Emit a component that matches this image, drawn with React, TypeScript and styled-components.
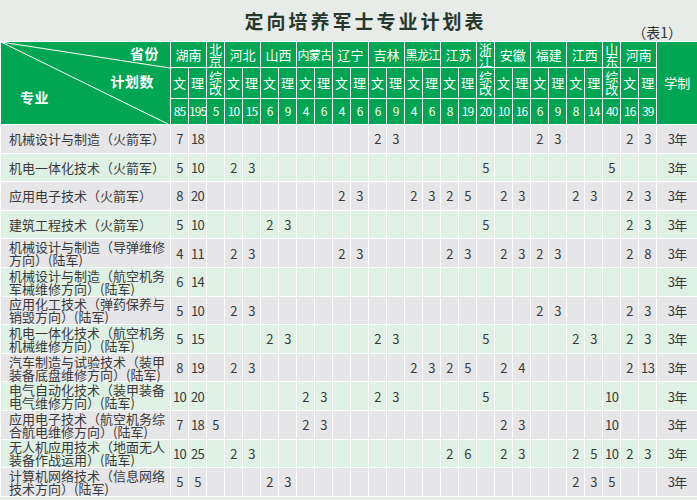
import styled, { createGlobalStyle } from "styled-components";
import { Fragment } from "react";

const GlobalStyle = createGlobalStyle`
  html, body {
    margin: 0;
    padding: 0;
  }
  body {
    background: #e4ede6;
    font-family: "Noto Sans CJK SC", "Noto Sans", sans-serif;
  }
`;

type Province = { name: string; kinds: string[]; totals: number[] };

const provinces: Province[] = [
  { name: "湖南", kinds: ["文", "理"], totals: [85, 195] },
  { name: "北京", kinds: ["综改"], totals: [5] },
  { name: "河北", kinds: ["文", "理"], totals: [10, 15] },
  { name: "山西", kinds: ["文", "理"], totals: [6, 9] },
  { name: "内蒙古", kinds: ["文", "理"], totals: [4, 6] },
  { name: "辽宁", kinds: ["文", "理"], totals: [4, 6] },
  { name: "吉林", kinds: ["文", "理"], totals: [6, 9] },
  { name: "黑龙江", kinds: ["文", "理"], totals: [4, 6] },
  { name: "江苏", kinds: ["文", "理"], totals: [8, 19] },
  { name: "浙江", kinds: ["综改"], totals: [20] },
  { name: "安徽", kinds: ["文", "理"], totals: [10, 16] },
  { name: "福建", kinds: ["文", "理"], totals: [6, 9] },
  { name: "江西", kinds: ["文", "理"], totals: [8, 14] },
  { name: "山东", kinds: ["综改"], totals: [40] },
  { name: "河南", kinds: ["文", "理"], totals: [16, 39] },
];

const COLS = 27;

// column index -> number of places
const majors: { name: string[]; plan: Record<number, number> }[] = [
  { name: ["机械设计与制造（火箭军）"], plan: { 0: 7, 1: 18, 11: 2, 12: 3, 20: 2, 21: 3, 25: 2, 26: 3 } },
  { name: ["机电一体化技术（火箭军）"], plan: { 0: 5, 1: 10, 3: 2, 4: 3, 17: 5, 24: 5 } },
  { name: ["应用电子技术（火箭军）"], plan: { 0: 8, 1: 20, 9: 2, 10: 3, 13: 2, 14: 3, 15: 2, 16: 5, 18: 2, 19: 3, 22: 2, 23: 3, 25: 2, 26: 3 } },
  { name: ["建筑工程技术（火箭军）"], plan: { 0: 5, 1: 10, 5: 2, 6: 3, 17: 5, 25: 2, 26: 3 } },
  { name: ["机械设计与制造（导弹维修", "方向）(陆军)"], plan: { 0: 4, 1: 11, 3: 2, 4: 3, 9: 2, 10: 3, 15: 2, 16: 3, 18: 2, 19: 3, 20: 2, 21: 3, 25: 2, 26: 8 } },
  { name: ["机械设计与制造（航空机务", "军械维修方向）(陆军)"], plan: { 0: 6, 1: 14 } },
  { name: ["应用化工技术（弹药保养与", "销毁方向）(陆军)"], plan: { 0: 5, 1: 10, 3: 2, 4: 3, 20: 2, 21: 3, 25: 2, 26: 3 } },
  { name: ["机电一体化技术（航空机务", "机械维修方向）(陆军)"], plan: { 0: 5, 1: 15, 5: 2, 6: 3, 11: 2, 12: 3, 17: 5, 22: 2, 23: 3, 25: 2, 26: 3 } },
  { name: ["汽车制造与试验技术（装甲", "装备底盘维修方向）(陆军)"], plan: { 0: 8, 1: 19, 3: 2, 4: 3, 13: 2, 14: 3, 15: 2, 16: 5, 18: 2, 19: 4, 25: 2, 26: 13 } },
  { name: ["电气自动化技术（装甲装备", "电气维修方向）(陆军)"], plan: { 0: 10, 1: 20, 7: 2, 8: 3, 11: 2, 12: 3, 17: 5, 24: 10 } },
  { name: ["应用电子技术（航空机务综", "合航电维修方向）(陆军)"], plan: { 0: 7, 1: 18, 2: 5, 7: 2, 8: 3, 18: 2, 19: 3, 24: 10 } },
  { name: ["无人机应用技术（地面无人", "装备作战运用）(陆军)"], plan: { 0: 10, 1: 25, 3: 2, 4: 3, 15: 2, 16: 6, 18: 2, 19: 3, 22: 2, 23: 5, 24: 10, 25: 2, 26: 3 } },
  { name: ["计算机网络技术（信息网络", "技术方向）(陆军)"], plan: { 0: 5, 1: 5, 5: 2, 6: 3, 22: 2, 23: 3, 24: 5 } },
];

const Page = styled.div`
  width: 697px;
  height: 500px;
  overflow: hidden;
`;

const TitleBar = styled.div`
  display: grid;
  grid-template-columns: 1fr auto 1fr;
  align-items: center;
  height: 41px;
  padding: 0 15px 0 49px;
  box-sizing: border-box;
  background: #e7ece9;
`;

const Title = styled.h1`
  grid-column: 2;
  margin: 0;
  font-size: 19px;
  line-height: 22px;
  font-weight: 700;
  letter-spacing: 3px;
  color: #27372b;
`;

const TableNo = styled.span`
  justify-self: end;
  align-self: end;
  padding-bottom: 1px;
  font-size: 14px;
  line-height: 16px;
  color: #333;
`;

const Plan = styled.table`
  width: 697px;
  border-collapse: collapse;
  table-layout: fixed;
`;

const HeadRow = styled.tr<{ $h: number }>`
  height: ${(p) => p.$h}px;
`;

const HeadCell = styled.th<{ $squeeze?: boolean }>`
  background: #00a651;
  color: #fff;
  border: 1px solid #fff;
  padding: 0;
  font-weight: 400;
  font-size: ${(p) => (p.$squeeze ? "12px" : "13px")};
  letter-spacing: ${(p) => (p.$squeeze ? "-0.6px" : "0")};
  line-height: 12px;
  text-align: center;
  white-space: ${(p) => (p.$squeeze ? "nowrap" : "normal")};
  word-break: break-all;
`;

const TotalCell = styled(HeadCell)`
  font-size: 12px;
  letter-spacing: -0.9px;
  white-space: nowrap;
`;

const Corner = styled.th`
  position: relative;
  background: #00a651;
  border: 1px solid #fff;
  padding: 0;
  vertical-align: top;
`;

const Diagonals = styled.svg`
  position: absolute;
  inset: 0;
  width: 100%;
  height: 100%;
`;

const CornerLabels = styled.div`
  display: flex;
  flex-direction: column;
  height: 82px;
  color: #fff;
  font-size: 14px;
  line-height: 16px;
  font-weight: 700;
`;

const CornerLabel = styled.span<{ $end?: boolean; $edge: number; $top: number }>`
  align-self: ${(p) => (p.$end ? "flex-end" : "flex-start")};
  margin-top: ${(p) => p.$top}px;
  ${(p) => (p.$end ? `margin-right: ${p.$edge}px;` : `margin-left: ${p.$edge}px;`)}
  letter-spacing: 0.5px;
`;

const Row = styled.tr<{ $alt: boolean }>`
  height: 28.6px;
  background: ${(p) => (p.$alt ? "#dff1e4" : "#e6e6e8")};
`;

const NameCell = styled.td`
  border: 1px solid #fff;
  padding: 0 0 0 8px;
  font-size: 13px;
  line-height: 13px;
  color: #3a3a3a;
  text-align: left;
  white-space: nowrap;
`;

const NumCell = styled.td`
  border: 1px solid #fff;
  padding: 0;
  font-size: 13px;
  letter-spacing: -0.6px;
  color: #3a3a3a;
  text-align: center;
  white-space: nowrap;
`;

export default function App() {
  return (
    <Page>
      <GlobalStyle />
      <TitleBar>
        <Title>定向培养军士专业计划表</Title>
        <TableNo>（表1）</TableNo>
      </TitleBar>
      <Plan>
        <colgroup>
          <col style={{ width: 170 }} />
          {Array.from({ length: COLS }, (_, i) => (
            <col key={i} style={{ width: 18 }} />
          ))}
          <col style={{ width: 41 }} />
        </colgroup>
        <thead>
          <HeadRow $h={26}>
            <Corner rowSpan={3}>
              <Diagonals viewBox="0 0 170 82" preserveAspectRatio="none">
                <line x1="0" y1="0" x2="170" y2="26" stroke="#fff" strokeWidth="1" />
                <line x1="0" y1="0" x2="168" y2="82" stroke="#fff" strokeWidth="1" />
              </Diagonals>
              <CornerLabels>
                <CornerLabel $end $edge={11} $top={3}>省份</CornerLabel>
                <CornerLabel $end $edge={16} $top={12}>计划数</CornerLabel>
                <CornerLabel $edge={19} $top={0}>专业</CornerLabel>
              </CornerLabels>
            </Corner>
            {provinces.map((p) => (
              <HeadCell key={p.name} colSpan={p.kinds.length} $squeeze={p.name.length > 2}>
                {p.name}
              </HeadCell>
            ))}
            <HeadCell rowSpan={3}>学制</HeadCell>
          </HeadRow>
          <HeadRow $h={30}>
            {provinces.map((p) =>
              p.kinds.map((k, i) => <HeadCell key={p.name + i}>{k}</HeadCell>)
            )}
          </HeadRow>
          <HeadRow $h={26}>
            {provinces.map((p) =>
              p.totals.map((t, i) => <TotalCell key={p.name + i}>{t}</TotalCell>)
            )}
          </HeadRow>
        </thead>
        <tbody>
          {majors.map((m, r) => (
            <Row key={r} $alt={r % 2 === 1}>
              <NameCell>
                {m.name.map((line, i) => (
                  <Fragment key={i}>
                    {i > 0 && <br />}
                    {line}
                  </Fragment>
                ))}
              </NameCell>
              {Array.from({ length: COLS }, (_, c) => (
                <NumCell key={c}>{m.plan[c] ?? ""}</NumCell>
              ))}
              <NumCell>3年</NumCell>
            </Row>
          ))}
        </tbody>
      </Plan>
    </Page>
  );
}
